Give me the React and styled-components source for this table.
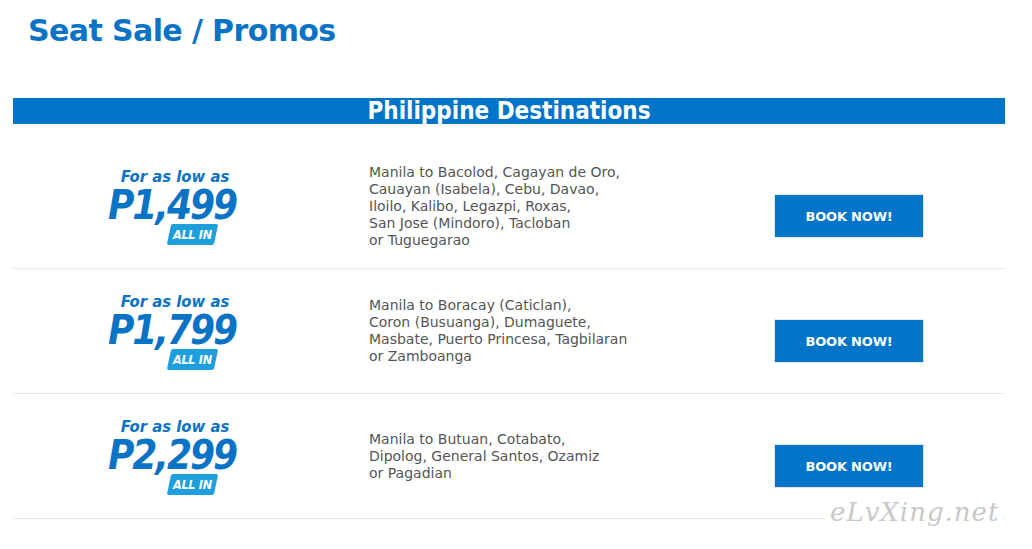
import React from "react";
import styled, { createGlobalStyle } from "styled-components";

const Global = createGlobalStyle`
  html, body { margin: 0; padding: 0; background: #fff; }
  body { font-family: "DejaVu Sans", Verdana, sans-serif; }
`;

const Page = styled.div`
  position: relative;
  width: 1032px;
  height: 549px;
  overflow: hidden;
  padding: 0 27px 0 13px;
  box-sizing: border-box;
`;

const Title = styled.h1`
  margin: 0;
  padding: 11px 0 0 15px;
  height: 98px;
  box-sizing: border-box;
  font-family: "DejaVu Sans", Verdana, sans-serif;
  font-size: 30px;
  font-weight: bold;
  color: #0a73c6;
  line-height: 40px;
  letter-spacing: -0.6px;
`;

const Bar = styled.div`
  height: 26px;
  background: #0074c8;
  color: #fff;
  display: flex;
  align-items: center;
  justify-content: center;
  font-family: "DejaVu Sans", Verdana, sans-serif;
  font-weight: bold;
  font-size: 24px;
  font-stretch: condensed;
  margin-bottom: 20px;
  overflow: hidden;
`;

const Row = styled.div`
  display: grid;
  grid-template-columns: 318px 1fr 312px;
  height: 125px;
  box-sizing: border-box;
  border-bottom: 1px solid #e8e8e8;
  align-items: center;
`;

const PriceCell = styled.div`
  display: flex;
  flex-direction: column;
  align-items: center;
`;

const Lead = styled.div`
  font-family: "DejaVu Sans", Verdana, sans-serif;
  font-style: italic;
  font-weight: bold;
  font-size: 16.5px;
  font-stretch: condensed;
  color: #0a73c6;
  line-height: 18px;
  height: 18px;
  margin-left: 6px;
  margin-bottom: 2px;
`;

const Price = styled.div`
  font-family: "DejaVu Sans", Verdana, sans-serif;
  font-style: italic;
  font-weight: bold;
  font-size: 40px;
  font-stretch: condensed;
  color: #0a73c6;
  line-height: 34px;
  height: 34px;
  letter-spacing: -2px;
  margin-bottom: 2px;
`;

const Badge = styled.div`
  margin: 0 0 0 40px;
  width: 47px;
  height: 21px;
  background: #1e9fdc;
  transform: skewX(-12deg);
  border-radius: 2px;
  display: flex;
  align-items: center;
  justify-content: center;
`;

const BadgeText = styled.span`
  transform: skewX(12deg);
  color: #fff;
  font-family: "DejaVu Sans", Verdana, sans-serif;
  font-weight: bold;
  font-style: italic;
  font-size: 12.5px;
  font-stretch: condensed;
  letter-spacing: -0.3px;
`;

const Routes = styled.div`
  padding-left: 38px;
  padding-top: ${p => p.$offset || 0}px;
  font-family: "DejaVu Sans", Verdana, sans-serif;
  font-size: 14px;
  line-height: 17px;
  color: #555;
`;

const ButtonCell = styled.div`
  display: flex;
  justify-content: center;
  padding-top: 20px;
`;

const Button = styled.button`
  width: 150px;
  height: 44px;
  border: 1px solid #e6e6e6;
  background: #0074c8;
  background-clip: padding-box;
  color: #fff;
  font-family: "DejaVu Sans", Verdana, sans-serif;
  font-weight: bold;
  font-size: 13px;
  letter-spacing: -0.2px;
  cursor: pointer;
  padding: 0;
`;

const Watermark = styled.div`
  position: absolute;
  left: 826px;
  top: 497px;
  padding: 0 4px;
  background: #fff;
  font-family: "DejaVu Serif", serif;
  font-style: italic;
  font-size: 26px;
  color: #c8c8c8;
  letter-spacing: 1px;
`;

const rows = [
  { price: "P1,499", lines: ["Manila to Bacolod, Cagayan de Oro,", "Cauayan (Isabela), Cebu, Davao,", "Iloilo, Kalibo, Legazpi, Roxas,", "San Jose (Mindoro), Tacloban", "or Tuguegarao"], ro: 0 },
  { price: "P1,799", lines: ["Manila to Boracay (Caticlan),", "Coron (Busuanga), Dumaguete,", "Masbate, Puerto Princesa, Tagbilaran", "or Zamboanga"], ro: 0 },
  { price: "P2,299", lines: ["Manila to Butuan, Cotabato,", "Dipolog, General Santos, Ozamiz", "or Pagadian"], ro: 0 },
];

export default function App() {
  return (
    <Page>
      <Global />
      <Title>Seat Sale / Promos</Title>
      <Bar>Philippine Destinations</Bar>
      {rows.map((r, i) => (
        <Row key={i}>
          <PriceCell>
            <Lead>For as low as</Lead>
            <Price>{r.price}</Price>
            <Badge><BadgeText>ALL IN</BadgeText></Badge>
          </PriceCell>
          <Routes $offset={r.ro}>
            {r.lines.map((l, j) => (
              <div key={j}>{l}</div>
            ))}
          </Routes>
          <ButtonCell>
            <Button>BOOK NOW!</Button>
          </ButtonCell>
        </Row>
      ))}
      <Watermark>eLvXing.net</Watermark>
    </Page>
  );
}
